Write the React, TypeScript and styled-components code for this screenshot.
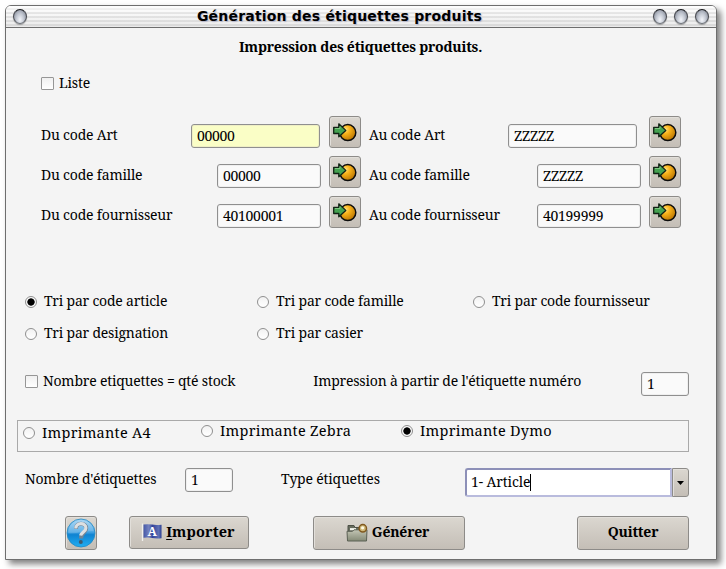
import React from 'react';
import styled, { createGlobalStyle, css } from 'styled-components';

const GlobalStyle = createGlobalStyle`
  * { box-sizing: border-box; }
  body {
    margin: 0;
    background: #fff;
    font: 14px/20px "Noto Serif", "DejaVu Serif Condensed", serif;
    letter-spacing: -0.2px;
    color: #000;
  }
`;

const Desktop = styled.div`
  width: 726px;
  height: 569px;
  padding: 5px;
  overflow: hidden;
`;

const Window = styled.main`
  width: 712px;
  height: 555px;
  display: flex;
  flex-direction: column;
  border: 1px solid #6e6e6e;
  border-radius: 6px 6px 0 0;
  background: #f4f4f4;
  box-shadow: 4px 4px 6px rgba(0, 0, 0, 0.5);
  overflow: hidden;
`;

const TitleBar = styled.header`
  height: 22px;
  flex: none;
  display: flex;
  align-items: center;
  padding: 0 7px;
  border-bottom: 1px solid #6e6e6e;
  background:
    linear-gradient(rgba(255, 255, 255, 0.75), rgba(255, 255, 255, 0) 35%, rgba(150, 150, 150, 0.14)),
    repeating-linear-gradient(#f8f8f8 0 2px, #e4e4e4 2px 4px);
`;

const Title = styled.h1`
  flex: 1;
  margin: -2px 1px 0 0;
  text-align: center;
  font: bold 14px/20px "DejaVu Sans", sans-serif;
  letter-spacing: 0.2px;
  text-shadow: 1px 1px 1px #b4b6ca;
  white-space: nowrap;
`;

const Orbs = styled.div`
  display: flex;
  gap: 7px;
`;

const Orb = styled.i`
  width: 14px;
  height: 15px;
  border: 1.5px solid #4a4c52;
  border-top-color: #17181b;
  border-bottom-color: #6f737a;
  border-radius: 50%;
  background: radial-gradient(ellipse at 50% 75%, #f3f5fa 0, #c3c8d2 45%, #747a88 100%);
  box-shadow: 0 1px 1px rgba(0, 0, 0, 0.3);
`;

const Heading = styled.h2`
  margin: 9px 0 0 -1px;
  text-align: center;
  font-size: 14px;
  line-height: 20px;
  letter-spacing: -0.22px;
`;

const Choice = styled.label<{ $gap?: number; $wide?: boolean; $drop?: number }>`
  display: flex;
  align-items: center;
  gap: ${p => p.$gap ?? 5}px;
  white-space: nowrap;
  ${p => p.$wide && css`
    font-size: 14.5px;
    line-height: 18px;
    letter-spacing: 0.25px;
  `}
  ${p => p.$drop && css`padding-top: ${p.$drop}px;`}
`;

const CheckMark = styled.i`
  width: 13px;
  height: 13px;
  border: 1px solid #969696;
  border-radius: 1px;
  background: linear-gradient(#f0f0f0, #fff);
`;

const RadioMark = styled.i<{ $on?: boolean }>`
  width: 12px;
  height: 12px;
  margin-top: 2px;
  border: 1px solid #8f8f8f;
  border-radius: 50%;
  background: ${p => p.$on
    ? 'radial-gradient(circle, #000 0 3.3px, #fafafa 4px)'
    : 'linear-gradient(#f2f2f2, #fff)'};
`;

const ListRow = styled.div`
  display: flex;
  margin: 16px 0 0 35px;
`;

const Criteria = styled.section`
  display: grid;
  grid-template-columns: 138px 134px 32px 124px 140px 32px;
  grid-auto-rows: 40px;
  column-gap: 8px;
  margin: 23px 0 0 35px;
`;

const CriterionLabel = styled.span`
  padding-top: 9px;
  white-space: nowrap;
`;

const Field = styled.div<{ $w: number; $active?: boolean }>`
  width: ${p => p.$w}px;
  height: 24px;
  padding: 0 5px;
  border: 1px solid #8f8f8f;
  border-radius: 3px;
  box-shadow: inset 0 0 0 1px ${p => (p.$active ? '#efefc4' : '#efefef')};
  background: ${p => (p.$active ? '#fafec6' : '#fafafa')};
  line-height: 22px;
  letter-spacing: -0.3px;
`;

const FieldSlot = styled.div<{ $inset: number }>`
  display: flex;
  justify-content: flex-end;
  padding: 8px ${p => p.$inset}px 0 0;
`;

const buttonFace = css`
  display: flex;
  align-items: center;
  justify-content: center;
  padding: 0;
  border: 1px solid #8d8b88;
  border-radius: 3px;
  background: linear-gradient(#dbd7d0, #c4beb6);
  box-shadow: inset 1px 1px 0 #e2dfda;
  color: #000;
`;

const PickButton = styled.button`
  ${buttonFace}
  width: 32px;
  height: 32px;
`;

const SortGrid = styled.section`
  display: grid;
  grid-template-columns: 232px 216px 1fr;
  grid-template-rows: 20px 20px;
  row-gap: 12px;
  margin: 55px 0 0 19.4px;
`;

const StockRow = styled.div`
  display: flex;
  height: 30px;
  margin: 19px 27px 0 19px;
  padding-top: 9px;
`;

const StockText = styled.span`
  flex: 1;
  margin-left: 78px;
  white-space: nowrap;
`;

const StockCheck = styled(Choice)`
  height: 20px;
`;

const StartField = styled(Field)`
  margin-top: 1px;
`;

const Printers = styled.fieldset`
  display: grid;
  grid-template-columns: 178px 200px 1fr;
  align-items: start;
  width: 672px;
  height: 32px;
  margin: 28px 0 0 11px;
  padding: 0 5.4px;
  border: 1px solid #a9a9a9;
`;

const LabelRow = styled.div`
  display: flex;
  height: 30px;
  margin: 15px 27px 0 19px;
  padding-top: 1px;
`;

const Caption = styled.span<{ $w: number; $before?: number }>`
  width: ${p => p.$w}px;
  margin-left: ${p => p.$before ?? 0}px;
  padding-top: 1px;
  white-space: nowrap;
`;

const Combo = styled.div`
  display: flex;
  width: 224px;
  height: 29px;
  margin-left: auto;
`;

const ComboText = styled.div`
  flex: 1;
  display: flex;
  align-items: center;
  padding: 0 0 1px 4px;
  border: 2px solid #b9bbdd;
  border-top-color: #8d90b8;
  border-left-color: #8d90b8;
  border-radius: 3px 0 0 3px;
  background: #fff;
  letter-spacing: -0.1px;
`;

const Caret = styled.i`
  width: 1px;
  height: 17px;
  background: #000;
`;

const ComboArrow = styled.button`
  ${buttonFace}
  width: 17px;
  border-radius: 0 3px 3px 0;
`;

const Actions = styled.footer`
  display: flex;
  margin: 19px 27px 0 59px;
`;

const ActionButton = styled.button<{ $w: number; $h?: number; $before?: number; $nudge?: number }>`
  ${buttonFace}
  gap: 4px;
  width: ${p => p.$w}px;
  height: ${p => p.$h ?? 34}px;
  margin-left: ${p => p.$before ?? 0}px;
  padding: 0 ${p => p.$nudge ?? 0}px 2px 0;
  font: bold 14px/20px "Noto Serif", "DejaVu Serif Condensed", serif;
  letter-spacing: -0.2px;
`;

const HelpButton = styled.button`
  ${buttonFace}
  width: 32px;
  height: 34px;
`;

const ImportText = styled.span`
  margin-top: -1px;
  font-size: 14.5px;
  letter-spacing: 0.12px;
`;

const Mnemonic = styled.span`
  text-decoration: underline;
  text-underline-offset: 2px;
`;

const PickIcon = () => (
  <svg width="26" height="22" viewBox="0 0 26 22">
    <defs>
      <radialGradient id="ball" cx="35%" cy="30%" r="75%">
        <stop offset="0" stopColor="#ffe07a" />
        <stop offset="0.35" stopColor="#f9b41c" />
        <stop offset="1" stopColor="#b97300" />
      </radialGradient>
    </defs>
    <circle cx="15.8" cy="11.600" r="8" fill="url(#ball)" stroke="#0d0d0d" strokeWidth="1.5" />
    <path d="M1.700 6.300H6.800V2.800L13.800 9.400L6.800 15.700V12.500H1.700Z" fill="#45a251" stroke="#122215" strokeWidth="1.300" strokeLinejoin="round" />
    <path d="M3 7.500H8V5.500" fill="none" stroke="#83c886" strokeWidth="0.900" />
  </svg>
);

const HelpIcon = () => (
  <svg width="30" height="32" viewBox="0 0 30 32">
    <defs>
      <linearGradient id="sky" x2="0" y2="1">
        <stop offset="0" stopColor="#9fd2f3" />
        <stop offset="0.46" stopColor="#48a5e3" />
        <stop offset="0.56" stopColor="#0f83d2" />
        <stop offset="1" stopColor="#20aef2" />
      </linearGradient>
    </defs>
    <circle cx="15" cy="16" r="14" fill="url(#sky)" stroke="#2388c2" strokeWidth="0.800" />
    <path d="M2.300 16C2.500 7 9 3 15 3S27 7 27.700 14C20 13.500 10 17 2.300 16Z" fill="#fff" opacity="0.160" />
    <path d="M10 12C9.600 5 20.300 5 20.200 11.500C20.100 16 14.900 15.500 14.900 21.500" fill="none" stroke="#6f8496" strokeWidth="4" />
    <path d="M9.800 11.500C9.800 5.200 19.900 5.200 19.900 11C19.900 14.800 15.400 14.800 14.600 18.500" fill="none" stroke="#dde0e2" strokeWidth="3.200" />
    <circle cx="14.800" cy="25" r="2" fill="#3f5b70" />
  </svg>
);

const FlagIcon = () => (
  <svg width="21" height="20" viewBox="0 0 21 20">
    <defs>
      <linearGradient id="flag">
        <stop offset="0" stopColor="#4458a8" />
        <stop offset="0.3" stopColor="#7583bf" />
        <stop offset="0.5" stopColor="#33439a" />
        <stop offset="0.85" stopColor="#6072b6" />
        <stop offset="1" stopColor="#293c91" />
      </linearGradient>
    </defs>
    <path d="M1.500 1.500V19" stroke="#f1f1ed" strokeWidth="1.300" />
    <path d="M2.500 2.500Q7 1.800 11 2.600T20.500 2.700V16.300Q15 16.800 11 16T2.500 15.800Z" fill="url(#flag)" />
    <text x="11" y="13.600" textAnchor="middle" fontFamily="Noto Serif, serif" fontSize="12.500" fontWeight="bold" fill="#fff">A</text>
  </svg>
);

const FolderIcon = () => (
  <svg width="22" height="19" viewBox="0 0 22 19">
    <defs>
      <linearGradient id="folder" x2="0" y2="1">
        <stop offset="0" stopColor="#c3c6b5" />
        <stop offset="1" stopColor="#858a76" />
      </linearGradient>
    </defs>
    <path d="M2 9V2.500H8L9 4.500H20V9Z" fill="#676c5e" stroke="#4c5046" />
    <path d="M4 6.200H10" stroke="#f4f5ee" strokeWidth="2.200" />
    <path d="M1 8.300H6.500L8 6.800H21L20.500 18H1.500Z" fill="url(#folder)" stroke="#5b6054" strokeLinejoin="round" />
    <circle cx="16.800" cy="5.300" r="3.700" fill="#cfb878" stroke="#80591f" strokeWidth="1.500" />
    <circle cx="16.600" cy="4.800" r="1.600" fill="#fffbe4" />
  </svg>
);

const criteria = [
  { name: 'code Art', from: '00000', to: 'ZZZZZ', wide: true },
  { name: 'code famille', from: '00000', to: 'ZZZZZ', wide: false },
  { name: 'code fournisseur', from: '40100001', to: '40199999', wide: false },
];

const sorts = [
  'Tri par code article',
  'Tri par code famille',
  'Tri par code fournisseur',
  'Tri par designation',
  'Tri par casier',
];

export default function App() {
  return (
    <Desktop>
      <GlobalStyle />
      <Window>
        <TitleBar>
          <Orb />
          <Title>Génération des étiquettes produits</Title>
          <Orbs><Orb /><Orb /><Orb /></Orbs>
        </TitleBar>
        <Heading>Impression des étiquettes produits.</Heading>
        <ListRow>
          <Choice><CheckMark />Liste</Choice>
        </ListRow>
        <Criteria>
          {criteria.map(c => (
            <React.Fragment key={c.name}>
              <CriterionLabel>Du {c.name}</CriterionLabel>
              <FieldSlot $inset={c.wide ? 1 : 0}>
                <Field $w={c.wide ? 129 : 104} $active={c.wide}>{c.from}</Field>
              </FieldSlot>
              <PickButton><PickIcon /></PickButton>
              <CriterionLabel>Au {c.name}</CriterionLabel>
              <FieldSlot $inset={c.wide ? 4 : 0}>
                <Field $w={c.wide ? 129 : 104}>{c.to}</Field>
              </FieldSlot>
              <PickButton><PickIcon /></PickButton>
            </React.Fragment>
          ))}
        </Criteria>
        <SortGrid>
          {sorts.map((s, i) => (
            <Choice key={s} $gap={6.6}><RadioMark $on={i === 0} />{s}</Choice>
          ))}
        </SortGrid>
        <StockRow>
          <StockCheck><CheckMark />Nombre etiquettes = qté stock</StockCheck>
          <StockText>Impression à partir de l'étiquette numéro</StockText>
          <StartField $w={48}>1</StartField>
        </StockRow>
        <Printers>
          <Choice $wide $gap={6.6} $drop={2}><RadioMark />Imprimante A4</Choice>
          <Choice $wide $gap={6.6}><RadioMark />Imprimante Zebra</Choice>
          <Choice $wide $gap={6.6}><RadioMark $on />Imprimante Dymo</Choice>
        </Printers>
        <LabelRow>
          <Caption $w={160}>Nombre d'étiquettes</Caption>
          <Field $w={48}>1</Field>
          <Caption $w={100} $before={48}>Type étiquettes</Caption>
          <Combo>
            <ComboText>1- Article<Caret /></ComboText>
            <ComboArrow>
              <svg width="7" height="4" viewBox="0 0 7 4"><path d="M0 0H7L3.500 4Z" /></svg>
            </ComboArrow>
          </Combo>
        </LabelRow>
        <Actions>
          <HelpButton><HelpIcon /></HelpButton>
          <ActionButton $w={120} $h={33} $before={32} $nudge={2}>
            <FlagIcon /><ImportText><Mnemonic>I</Mnemonic>mporter</ImportText>
          </ActionButton>
          <ActionButton $w={152} $before={64} $nudge={3}><FolderIcon />Générer</ActionButton>
          <ActionButton $w={112} $before={112}>Quitter</ActionButton>
        </Actions>
      </Window>
    </Desktop>
  );
}
